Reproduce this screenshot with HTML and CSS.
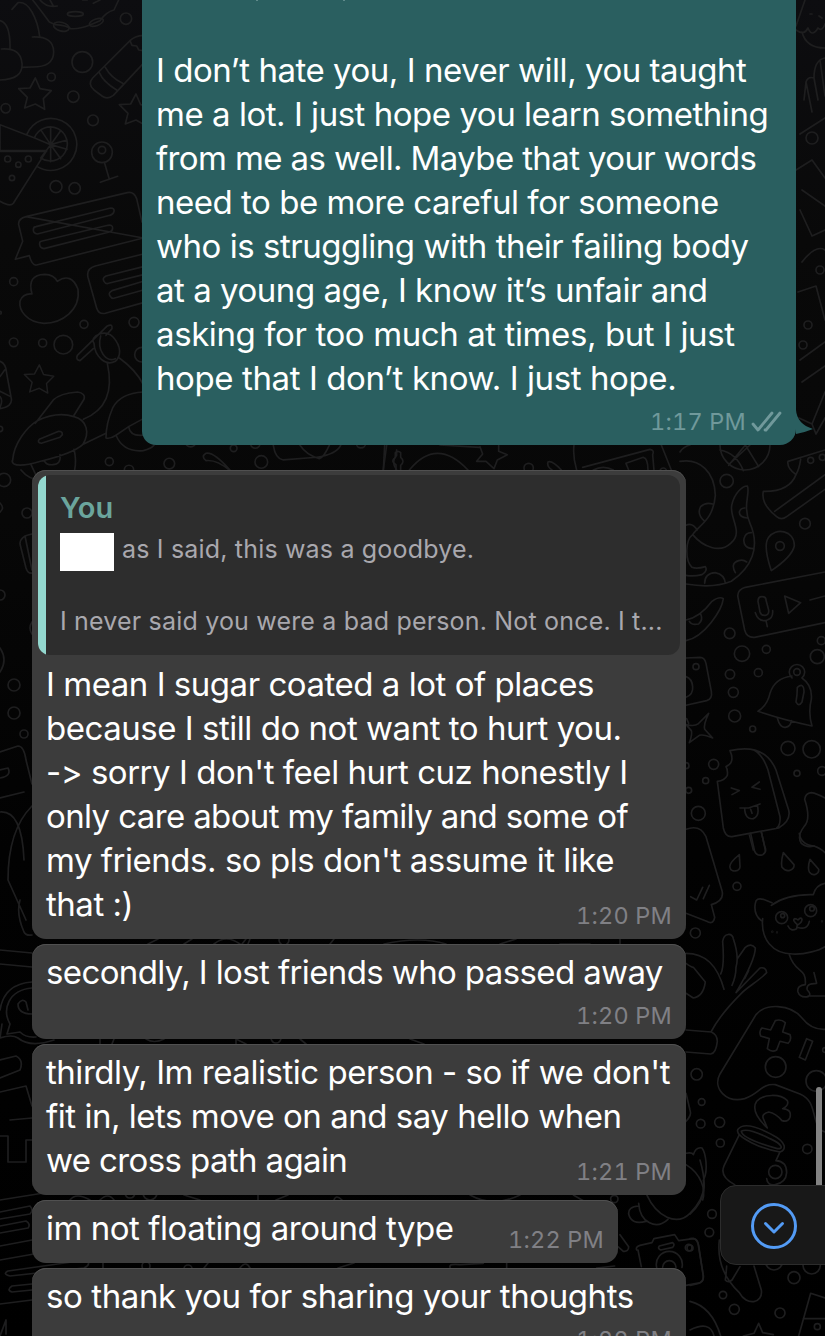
FILE: index.html
```html
<!DOCTYPE html>
<html lang="en">
<head>
<meta charset="utf-8">
<meta name="viewport" content="width=device-width, initial-scale=1">
<title>Chat</title>
<link rel="stylesheet" href="styles.css">
</head>
<body>

<div class="chat">
  <!-- doodle wallpaper -->
  <svg class="wallpaper" width="825" height="1336" viewBox="0 0 825 1336">
    <defs>
      <path id="star" d="M0-48L14-16 48-10 24 14 28 46 0 30-32 42-24 10-50-16-16-18Z"/>
    </defs>
    <g transform="scale(.3333)">
      <path d="M36 28L54 8Q78 4 96 36T119 109M97 111Q160 108 161 155T95 201L66 202M0 62Q32 70 30 148M4 147Q62 142 66 190T0 240"/>
      <path d="M98 0Q118 25 148 66L166 74Q200 76 212 86Q238 88 268 76L300 62Q318 36 342 30L356 0M120 0Q140 24 172 18M150 0L160 18M280 10L300 0M248 0H262"/>
      <ellipse cx="184" cy="80" rx="24" ry="13" transform="rotate(15 184 80)"/><ellipse cx="226" cy="42" rx="24" ry="7"/><ellipse cx="289" cy="67" rx="22" ry="10" transform="rotate(-20 289 67)"/>
      <circle cx="378" cy="56" r="17"/><circle cx="247" cy="186" r="31"/><circle cx="154" cy="231" r="12"/><circle cx="220" cy="290" r="17"/><circle cx="17" cy="325" r="14"/><circle cx="279" cy="361" r="16"/>
      <path d="M430 106Q404 108 390 122L278 234Q262 252 282 270L306 288Q322 300 340 286L430 190M390 122L396 136 410 138 416 150 430 152M298 218Q310 246 350 270M316 202Q332 232 368 250"/>
      <use href="#star" x="106" y="282"/><use href="#star" x="408" y="330"/><use href="#star" transform="translate(118 1138) scale(.9)"/>
      <path d="M80 404A78 78 0 1 1 112 500M104 412A51 51 0 1 1 122 474M152 434L104 414 0 374V452H140L40 610Q30 622 0 604M152 434V382M152 434L182 392M152 434L201 420M152 434L201 448M152 434L182 476M152 434V485M152 434L122 474M152 434L124 392M0 454H140"/>
      <circle cx="23" cy="477" r="9"/><circle cx="55" cy="494" r="8"/><circle cx="85" cy="477" r="9"/><circle cx="36" cy="534" r="8"/>
      <circle cx="306" cy="457" r="31"/><circle cx="306" cy="450" r="11"/><path d="M314 490L328 538M301 547L353 529"/>
      <circle cx="168" cy="560" r="18"/><circle cx="224" cy="565" r="17"/>
      <path d="M78 650L382 578Q402 574 410 596L426 666M430 714L110 795Q96 798 88 767L46 778 68 724 56 674Q54 656 78 650ZM108 680L332 624Q344 624 342 634T330 646L112 702Q100 700 100 690T108 680ZM124 724L324 676Q338 674 338 684T328 696L132 746Q120 744 119 734T124 724Z"/>
      <path d="M430 762L286 798Q258 806 264 832L290 924Q296 944 316 940L430 908M430 800L318 828Q306 834 312 844T326 850L430 824M430 844L336 872Q324 878 330 888T344 894L430 870"/>
      <path d="M96 882Q80 824 134 823Q162 824 172 844Q214 816 234 868C242 930 186 970 132 970C80 968 56 930 60 904Q68 880 96 882Z"/>
      <circle cx="41" cy="845" r="12"/><circle cx="0" cy="938" r="4"/><circle cx="252" cy="973" r="12"/><circle cx="402" cy="967" r="15"/><circle cx="41" cy="1027" r="13"/><circle cx="128" cy="1029" r="12"/><circle cx="190" cy="1034" r="28"/><circle cx="426" cy="1064" r="22"/><circle cx="0" cy="1287" r="8"/>
      <path d="M280 1046L240 1082Q226 1080 232 1066L322 978Q338 970 336 986L318 1006M282 1030C266 1010 318 984 340 1012C364 1040 364 1068 346 1084C318 1100 284 1070 282 1030ZM302 1008C290 1050 318 1090 346 1076M322 1090C340 1170 320 1230 250 1258M358 1074Q408 1110 430 1154"/>
      <path d="M106 1270L160 1200Q180 1180 232 1176Q258 1180 252 1198L222 1246M38 1380C42 1330 80 1282 112 1262C150 1244 190 1240 222 1250C262 1260 270 1300 248 1334Q220 1360 122 1384Q60 1402 42 1392Q34 1386 38 1380ZM118 1318L176 1294Q188 1294 187 1304L180 1312 124 1330Q110 1328 118 1318ZM248 1334L318 1300M222 1348Q230 1380 224 1410M180 1364Q184 1394 158 1394M92 1392L110 1430M134 1384Q140 1396 160 1394"/>
      <path d="M430 1176Q360 1180 338 1224 318 1270 318 1314Q330 1318 348 1306L386 1280 430 1256M348 1306Q370 1358 430 1352 454 1346 462 1336M386 1280Q390 1310 430 1306M0 1084Q18 1090 20 1120L34 1196Q38 1220 0 1226M0 1130L14 1110M0 1174L32 1190M0 1222Q10 1200 0 1190"/>
      <circle cx="328" cy="1385" r="12"/><circle cx="387" cy="1410" r="14"/><circle cx="508" cy="1391" r="16"/><circle cx="572" cy="1325" r="16"/><circle cx="701" cy="1345" r="10"/><circle cx="784" cy="1386" r="19"/><circle cx="766" cy="1331" r="14"/><circle cx="12" cy="1440" r="20"/><circle cx="1083" cy="1330" r="14"/>
      <path d="M690 1412Q650 1378 618 1382Q602 1370 618 1360 640 1354 690 1410M820 1336Q826 1376 850 1380L950 1372M900 1336Q920 1366 958 1376 970 1374 988 1336M950 1372Q1010 1362 1022 1336M1150 1410L1160 1336M1190 1350V1366Q1172 1384 1190 1410"/>
    </g>

    <!-- row of shapes between the two big bubbles -->
    <g transform="translate(380 430) scale(.3333)">
      <path d="M14 45L10 120M48 120V104Q30 94 46 82V68Q54 60 62 68V82Q76 94 62 106V120M88 120Q170 20 264 120M180 45L298 52M300 50L308 72 290 94 318 94 342 116 352 90 382 74 356 64V46M582 45Q578 80 590 120M608 112L810 58Q824 60 818 74L822 120M738 100L790 82Q804 84 804 120M738 100 746 120M640 120Q670 104 700 120M844 45L874 120M504 96Q516 90 544 120M504 96Q500 110 516 120"/>
      <circle cx="446" cy="114" r="14"/><circle cx="850" cy="124" r="10"/>
    </g>

    <!-- right edge, top -->
    <path d="M796 26L805 0M796 30Q804 36 808 28Q812 38 818 28 822 32 825 24M802 32Q806 48 825 48M810 14H812M819 16L822 18M804 100L806 82Q808 76 814 78L818 100M806 82 812 112M814 78Q814 60 825 58M820 60L825 96M800 134L825 118M796 170L812 160 825 178M802 190L825 206M800 210L812 236 825 230M802 262Q816 244 825 250M798 292L816 286 825 320M800 360L825 342M802 382 825 366M799 418L812 424 825 392M812 424L816 434 825 418"/>
    <circle cx="812" cy="138" r="6"/><circle cx="808" cy="325" r="4"/><circle cx="820" cy="270" r="4"/><circle cx="803" cy="345" r="4"/>

    <g transform="translate(680 430) scale(.3333)">
      <path d="M-10 180V130M0 66Q10 50 30 45M0 94C60 84 104 126 106 196C100 270 58 284 38 314C16 330 14 390 36 412Q50 418 76 410 84 422 66 434 40 440 18 436M38 314C70 352 120 370 152 340C194 306 144 260 156 222C164 190 186 168 202 168C212 188 186 228 210 280C242 352 214 414 154 454Q100 476 18 462M72 272Q50 252 62 230 76 216 98 222M18 286Q36 276 52 300M74 460Q74 430 106 428 134 434 136 460M166 428Q150 400 176 392 190 388 200 396M220 356Q188 354 192 326 196 308 214 308M202 264Q178 262 178 246 182 234 194 234"/>
      <path d="M120 45A75 75 0 0 0 270 45M120 60Q170 70 190 122M146 106L196 45 236 110M150 100 210 45"/>
      <circle cx="140" cy="153" r="20"/><circle cx="375" cy="281" r="16"/><circle cx="300" cy="348" r="13"/>
      <path d="M435 60L324 94Q320 114 348 134Q328 186 250 184Q242 222 290 260 304 272 320 260L435 178M362 88Q358 116 348 134M284 244L435 134"/><circle cx="392" cy="91" r="9"/><circle cx="427" cy="82" r="9"/>
      <path d="M274 422Q248 346 266 322C286 292 344 300 343 348Q336 380 274 422Z"/>
      <path d="M435 426L196 472Q170 480 174 502L194 600Q200 624 224 622L435 578M234 514Q234 500 246 500T258 510L266 540Q268 554 256 556T240 546ZM226 548Q236 578 262 570 280 564 278 542M258 572L262 590M314 498L362 518 326 550ZM390 510L435 498"/>
      <path d="M18 570Q60 562 96 514 118 498 130 506C126 540 74 620 18 632M28 574Q34 586 56 582 70 570 62 552M18 684L60 682Q74 682 78 700L94 784Q98 806 80 812L18 826M18 740Q36 746 38 770T18 802"/>
      <circle cx="48" cy="710" r="9"/><circle cx="149" cy="610" r="16"/><circle cx="186" cy="671" r="23"/><circle cx="259" cy="658" r="12"/><circle cx="150" cy="733" r="14"/><circle cx="235" cy="728" r="12"/><circle cx="160" cy="787" r="15"/><circle cx="164" cy="858" r="18"/><circle cx="218" cy="897" r="9"/><circle cx="424" cy="632" r="12"/><circle cx="412" cy="680" r="21"/><circle cx="324" cy="955" r="21"/><circle cx="395" cy="958" r="26"/><circle cx="351" cy="1030" r="9"/><circle cx="426" cy="1023" r="13"/><circle cx="101" cy="1003" r="15"/><circle cx="77" cy="1052" r="9"/><circle cx="55" cy="1150" r="21"/><circle cx="26" cy="1081" r="9"/><circle cx="18" cy="1007" r="9"/>
      <circle cx="351" cy="726" r="10"/><path d="M336 744A23 23 0 1 1 366 744Q398 766 394 808 384 848 396 888 310 870 234 844 262 826 270 790 284 744 336 738M292 864Q300 894 316 892 332 890 334 872M352 772Q372 756 372 786L366 816Q356 832 348 816 352 794 352 772Z"/>
      <path d="M26 880L20 866M86 850Q70 884 74 898L98 924Q70 912 58 916L28 938Q38 912 34 902L18 884Q44 890 54 882Z"/>
      <path d="M150 962Q254 938 288 1020L326 1140Q334 1172 296 1194L156 1220Q136 1222 130 1194L112 1054Q134 1052 142 1036 144 1018 138 1010 166 998 150 962ZM222 960Q248 974 264 1020L300 1160Q302 1186 290 1194M154 1074L178 1082 156 1094M238 1056L216 1072 240 1078M180 1134H206L240 1122M194 1136Q196 1170 220 1166 240 1158 232 1126M212 1138 216 1150M208 1214L220 1260M244 1206L256 1260"/>
      <path d="M435 1104Q410 1090 394 1088 376 1090 374 1108 394 1168 372 1190 350 1220 364 1240 380 1254 402 1248"/>
    </g>

    <!-- right edge, bottom -->
    <g transform="translate(680 820) scale(.3333)">
      <path d="M18 28Q60 12 78 50L126 212Q134 242 94 254L104 292Q100 316 80 304L18 280M32 230L50 240 68 202M70 236L88 196M212 40L224 94Q232 110 248 104 262 96 254 78L244 36M358 40Q362 74 402 78 424 86 435 98"/>
      <path d="M178 104Q146 130 150 142C152 158 182 156 180 138ZM310 98Q302 126 306 142C322 162 344 148 342 134ZM390 118Q382 144 388 156C400 172 418 160 416 148Z"/>
      <circle cx="171" cy="199" r="12"/><circle cx="46" cy="339" r="15"/><circle cx="50" cy="763" r="17"/><circle cx="65" cy="846" r="10"/><circle cx="62" cy="911" r="13"/><circle cx="119" cy="907" r="15"/><circle cx="121" cy="969" r="12"/><circle cx="382" cy="987" r="14"/>
      <path d="M244 302Q220 284 226 250 228 232 250 238L276 248M274 256Q320 222 400 224Q408 194 435 190M248 296C242 356 276 402 338 402 376 404 420 390 435 380M324 318Q332 336 350 326L352 314Q336 300 344 296 350 296 354 300 364 290 366 298 366 308 354 314M352 322Q382 332 388 304M328 404C346 462 380 440 376 494Q350 496 354 516 360 534 384 530 396 524 382 510 376 490 410 490L402 458M384 528H435"/>
      <circle cx="305" cy="293" r="18"/><circle cx="308" cy="287" r="6"/><circle cx="392" cy="272" r="18"/><circle cx="396" cy="266" r="7"/><circle cx="277" cy="335" r="1"/><circle cx="291" cy="337" r="1"/><circle cx="426" cy="304" r="1"/>
      <path d="M18 400C76 400 112 434 132 508M122 462Q134 440 128 364C132 338 156 338 160 356Q178 410 168 442 168 470 156 496M172 416L196 382Q214 368 226 384 226 420 168 518L240 444Q258 440 260 458C240 480 204 500 184 520 148 556 112 600 94 634M194 476 206 452M18 430Q34 442 40 442L76 486Q70 530 40 534L18 520M18 630L94 636Q112 644 112 664 108 700 92 702L18 696"/>
      <path d="M435 628Q394 630 366 594C330 550 256 550 228 584L120 762C96 806 140 850 194 836 240 820 244 790 286 794L360 822C400 840 396 870 410 910Q420 932 435 936M286 602Q302 596 316 608L308 636 330 644Q336 660 324 670L300 664 290 690Q276 698 262 686L268 656 242 648Q236 632 246 624L272 630ZM380 656L398 664 376 720 358 712Z"/><circle cx="287" cy="741" r="31"/><circle cx="409" cy="783" r="31"/><circle cx="435" cy="690" r="7"/>
      <path d="M262 924C226 890 218 862 230 844 250 822 300 820 322 842Q328 856 308 866 336 868 330 892 324 908 306 902 288 880 266 876 244 882 250 896ZM174 928C188 910 220 914 276 944 320 966 320 990 300 996 254 990 160 950 174 928ZM184 934C196 926 230 936 270 956 310 974 310 988 292 986 250 974 186 952 184 934ZM178 944L132 1038Q118 1070 164 1094M300 996L288 1022Q320 1024 320 1058 318 1088 286 1094 262 1098 260 1076"/><circle cx="286" cy="1056" r="20"/>
      <path d="M18 820L30 870Q36 886 18 904M18 1000Q36 996 40 1004 48 980 66 984C78 1000 84 1050 72 1076M18 1034C64 1062 78 1110 68 1140"/>
    </g>
    <g transform="translate(690 1160) scale(.3333)">
      <path d="M30 0C50 70 50 120 0 162M0 236Q18 232 24 250L40 346Q42 368 20 372L0 376M0 424Q66 440 92 528M0 510Q60 480 72 528M88 240C80 310 108 360 148 398 170 440 220 430 214 390L192 318M110 318Q108 346 106 360 114 370 126 360L150 320M160 528L192 520 206 490 218 518 250 524M405 414L362 400 326 528M340 476H405"/>
      <circle cx="66" cy="162" r="13"/><circle cx="58" cy="217" r="13"/><circle cx="312" cy="353" r="18"/><circle cx="99" cy="405" r="11"/><circle cx="133" cy="448" r="15"/><circle cx="270" cy="459" r="15"/><circle cx="382" cy="500" r="9"/><circle cx="252" cy="304" r="26"/><circle cx="365" cy="316" r="26"/><circle cx="0" cy="264" r="9"/>
    </g>
    <g transform="translate(440 1180) scale(.3333)">
      <path d="M790 0Q800 50 750 100C710 140 650 110 620 44M596 70C600 130 650 150 684 118M596 78Q564 80 566 102 574 136 618 124M540 164L566 200Q566 216 550 214L534 200M590 210Q586 200 600 196L636 188 642 176 704 164 716 182 760 176Q772 176 776 196L790 290Q792 308 770 310L738 316M594 210L604 260M658 198L698 188Q706 194 698 202L662 210Q652 206 658 198ZM650 262A39 39 0 1 1 726 262M668 262A20 20 0 1 1 708 262"/>
      <circle cx="746" cy="203" r="10"/><circle cx="523" cy="57" r="11"/>
      <path d="M90 45Q160 84 240 45M400 45 430 62M30 262Q26 250 60 254L130 250M200 248V264M470 264L524 258"/>
    </g>

    <!-- left edge below the first bubble -->
    <path d="M21 470Q34 486 56 476M0 503Q5 508 0 512M32 534Q20 536 20 544L26 568Q28 574 32 573M25 536 32 570M0 590A5 5 0 0 1 0 600M32 622Q28 628 32 634M0 648Q8 660 0 672M0 752L18 746Q24 746 26 760L32 784M0 770 8 768Q12 776 0 778M0 798L24 792M32 806Q8 830 8 880L26 920M0 812Q22 810 24 860M20 900Q16 914 24 932 26 936 32 935M0 950L32 953M0 964L32 967"/>
    <circle cx="27" cy="513" r="5"/><circle cx="14" cy="685" r="6"/><circle cx="14" cy="713" r="6"/><circle cx="24" cy="734" r="4"/>
    <path d="M32 982Q4 984 0 1010M2 1024L0 1038Q12 1034 18 1038 30 1048 54 1040M32 988C8 990 2 1010 10 1024L7 1034 20 1032Q26 1038 36 1037M32 1014Q18 1014 18 1004 22 998 26 1002L28 1010"/>
    <path d="M0 1060L16 1056Q24 1060 20 1070L0 1078M0 1092L26 1086 32 1106M10 1120 32 1118M0 1136H8V1162H26V1140H32M0 1200L50 1192M0 1212L30 1206Q34 1210 30 1214L0 1219M0 1226L26 1221Q31 1224 28 1228L0 1233M0 1246L32 1240M0 1260L34 1254M8 1271L86 1260Q92 1264 84 1268L10 1276Q2 1274 8 1271ZM32 1284L12 1286Q6 1290 12 1292L32 1290M0 1304L32 1300M0 1336L6 1320V1334"/>
    <path d="M148 944L158 939M184 944 192 939M214 944Q226 934 240 944M242 944 246 939M248 944 250 939M330 944 334 939M384 944Q420 936 446 944M500 944 516 939M560 944H590M620 944V939M100 1044V1039M112 1044 114 1039M146 1039Q154 1044 164 1039M236 1044V1039L246 1044M300 1039 306 1044M410 1039 424 1044M70 1200Q76 1192 90 1200M100 1200Q108 1192 114 1200M184 1195 200 1200M258 1200V1195M276 1200 288 1195M334 1200Q336 1194 342 1200M103 1268V1263M204 1268 208 1263M240 1268Q246 1260 250 1268M338 1268 354 1263"/>
    <circle cx="284" cy="940" r="5"/><circle cx="276" cy="1038" r="5"/><circle cx="130" cy="1193" r="5"/><circle cx="150" cy="1193" r="7"/><circle cx="146" cy="1266" r="4"/><circle cx="188" cy="1269" r="4"/>
  </svg>

  <div class="messages">
    <div class="bubble out">
      <i class="cut cut-comma"></i><i class="cut cut-y"></i>
      <p class="text">I don’t hate you, I never will, you taught<br>
        me a lot. I just hope you learn something<br>
        <span class="tight">from me as well. Maybe that your words</span><br>
        need to be more careful for someone<br>
        who is struggling with their failing body<br>
        at a young age, I know it’s unfair and<br>
        <span class="loose">asking for too much at times, but I just</span><br>
        <span class="loose">hope that I don’t know. I just hope.</span></p>
      <div class="time">1:17 PM
        <svg class="ticks" width="31" height="22" viewBox="0 0 31 22"><path d="M2 13L7 19 21 2M14 19L15 19 29 2"/></svg>
      </div>
      <svg class="tail" width="17" height="32" viewBox="0 0 17 32"><path d="M0 0Q1 14 17 19 10 22 0 24Z"/></svg>
    </div>

    <div class="bubble in quoted">
      <div class="quote">
        <div class="quote-name">You</div>
        <div class="quote-line"><span class="redacted"></span>as I said, this was a goodbye.</div>
        <div class="quote-line last">I never said you were a bad person. Not once. I t...</div>
      </div>
      <p class="text">I mean I sugar coated a lot of places<br>
        because I still do not want to hurt you.<br>
        -&gt; sorry I don't feel hurt cuz honestly I<br>
        <span class="tight">only care about my family and some of</span><br>
        my friends. so pls don't assume it like<br>
        that :)</p>
      <div class="time inline">1:20 PM</div>
    </div>

    <div class="bubble in">
      <p class="text"><span class="tight">secondly, I lost friends who passed away</span></p>
      <div class="time">1:20 PM</div>
    </div>

    <div class="bubble in">
      <p class="text">thirdly, Im realistic person - so if we don't<br>
        fit in, lets move on and say hello when<br>
        <span class="tight">we cross path again</span></p>
      <div class="time inline">1:21 PM</div>
    </div>

    <div class="bubble in short">
      <p class="text">im not floating around type</p>
      <div class="time inline">1:22 PM</div>
    </div>

    <div class="bubble in">
      <p class="text"><span class="loose">so thank you for sharing your thoughts</span></p>
      <div class="time">1:22 PM</div>
    </div>
  </div>

  <div class="scrollbar"></div>
  <button class="jump" aria-label="Scroll to bottom">
    <svg width="48" height="48" viewBox="0 0 48 48"><circle cx="24" cy="24" r="21.5"/><path d="M15.5 21.5L24 30 32.5 21.5"/></svg>
  </button>
</div>

</body>
</html>
```

FILE: styles.css
```css
* {box-sizing: border-box;}

body {
  margin: 0;
  background: #000;
  font-family: Inter, "Liberation Sans", sans-serif;
}

.chat {
  position: relative;
  width: 825px;
  height: 1336px;
  overflow: hidden;
  background: linear-gradient(#0d0d10 0, #090909 240px, #070707 520px, #020202 850px, #000 1336px);
}

.wallpaper {
  position: absolute;
  top: 0;
  left: 0;
  fill: none;
  stroke: #1e1e1f;
  stroke-width: 1.7;
  stroke-linecap: round;
  stroke-linejoin: round;
}
.wallpaper g {
  stroke-width: 5;
}

.messages {
  position: relative;
  display: flex;
  flex-direction: column;
  gap: 5px;
  padding-left: 32px;
}

.bubble {
  position: relative;
  width: 654px;
  padding: 6px 14px 8px;
  border-radius: 14px;
  color: #fff;
}

.in {
  background: #3c3c3c;
  box-shadow: inset 0 1px 0 #505050;
}

.out {
  margin-left: 110px;
  margin-bottom: 20px;
  padding: 48px 14px 8px;
  border-radius: 0 0 16px 14px;
  background: #2a5f60;
}

.short {
  width: 586px;
}

.text {
  margin: 0;
  font-size: 33px;
  line-height: 44px;
  letter-spacing: -0.47px;
  white-space: nowrap;
}
.tight {letter-spacing: -0.62px;}
.loose {letter-spacing: -0.4px;}

.time {
  margin-top: 7px;
  height: 30px;
  line-height: 30px;
  font-size: 23.5px;
  font-variant-numeric: tabular-nums;
  letter-spacing: 0.2px;
  text-align: right;
  color: #808085;
}
.inline {
  margin-top: -25px;
}
.out .time {
  display: flex;
  justify-content: flex-end;
  align-items: center;
  gap: 5px;
  color: #70999b;
}

.ticks {
  fill: none;
  stroke: #70999b;
  stroke-width: 2.8;
  stroke-linecap: round;
  stroke-linejoin: round;
}

.tail {
  position: absolute;
  right: -17px;
  bottom: 3px;
  fill: #2a5f60;
}

/* descenders of the line scrolled off the top */
.cut {
  position: absolute;
  top: 0;
  width: 2px;
  height: 1px;
  background: #5f8a8b;
}
.cut-comma {left: 114px;}
.cut-y {left: 201px;}

.quoted {
  padding-top: 5px;
}
.quote {
  height: 180px;
  margin: 0 -8px 7px;
  padding: 15px 0 0 22px;
  border-radius: 12px;
  background: linear-gradient(90deg, #93d8cf 8px, #2d2d2d 8px);
  overflow: hidden;
}
.quote-name {
  font-size: 29px;
  line-height: 36px;
  font-weight: 600;
  color: #6ba59d;
}
.quote-line {
  display: flex;
  align-items: center;
  height: 46px;
  font-size: 25px;
  letter-spacing: 0.18px;
  white-space: nowrap;
  color: #a9a8ae;
}
.last {
  margin-top: 26px;
}
.redacted {
  width: 54px;
  height: 38px;
  margin: 6px 8px 0 0;
  background: #fff;
}

.scrollbar {
  position: absolute;
  top: 1087px;
  right: 3px;
  width: 6px;
  height: 110px;
  border-radius: 3px 3px 0 0;
  background: #838383;
}

.jump {
  position: absolute;
  top: 1185px;
  right: -1px;
  width: 106px;
  height: 80px;
  padding: 2px 0 0 29px;
  border: 1px solid #2c2c2c;
  border-radius: 16px 0 0 16px;
  background: #181818;
  text-align: left;
}
.jump svg {
  display: block;
  fill: none;
  stroke: #539bf5;
  stroke-width: 3;
  stroke-linecap: round;
  stroke-linejoin: round;
}
```
